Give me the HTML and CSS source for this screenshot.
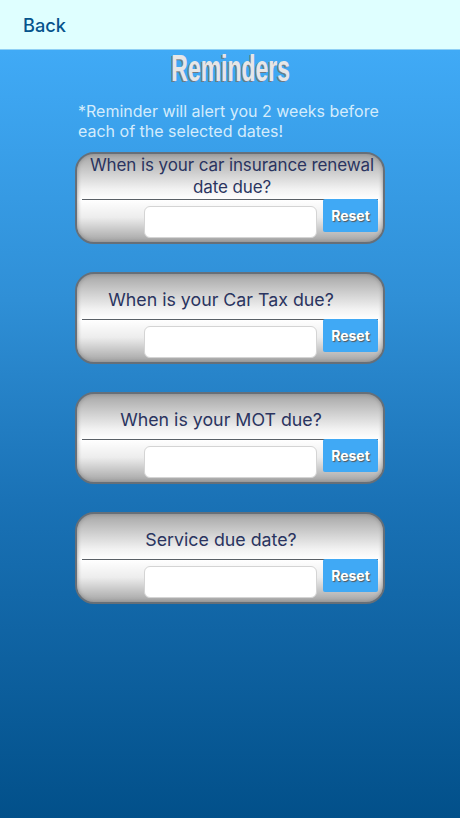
FILE: index.html
```html
<!DOCTYPE html>
<html lang="en">
<head>
    <meta charset="UTF-8">
    <meta name="viewport" content="width=device-width, initial-scale=1.0">
    <title>Reminders</title>
    <link rel="stylesheet" href="styles.css">
</head>
<body>
    <header class="topbar">
        <a class="back" href="#">Back</a>
    </header>

    <main class="content">
        <h1 class="title"><span>Reminders</span></h1>
        <p class="note">*Reminder will alert you 2 weeks before each of the selected dates!</p>

        <section class="card">
            <h2 class="question question-long">When is your car insurance renewal date due?</h2>
            <div class="answer">
                <input class="date" type="text">
                <button class="reset" type="button">Reset</button>
            </div>
        </section>

        <section class="card">
            <h2 class="question">When is your Car Tax due?</h2>
            <div class="answer">
                <input class="date" type="text">
                <button class="reset" type="button">Reset</button>
            </div>
        </section>

        <section class="card">
            <h2 class="question">When is your MOT due?</h2>
            <div class="answer">
                <input class="date" type="text">
                <button class="reset" type="button">Reset</button>
            </div>
        </section>

        <section class="card">
            <h2 class="question">Service due date?</h2>
            <div class="answer">
                <input class="date" type="text">
                <button class="reset" type="button">Reset</button>
            </div>
        </section>
    </main>
</body>
</html>
```

FILE: styles.css
```css
* {
    box-sizing: border-box;
}

html, body {
    height: 100%;
}

body {
    margin: 0;
    font-family: Inter, "Liberation Sans", sans-serif;
    background: linear-gradient(#40aaf6 50px, #2f8fd6 300px, #1a72b6 500px, #02508a 818px);
}

.topbar {
    height: 50px;
    padding: 14px 23px 0;
    background: #dfffff;
    border-bottom: 1px solid #8fd0f5;
}

.back {
    color: #06548c;
    font-size: 18.2px;
    font-weight: 500;
    text-decoration: none;
}

.content {
    display: flex;
    flex-direction: column;
    align-items: center;
}

.title {
    height: 36px;
    margin: 0 0 0 2px;
    font-family: "Liberation Sans", sans-serif;
    font-size: 37px;
    font-weight: 700;
    line-height: 37px;
    color: #e6e6e6;
}

.title span {
    display: inline-block;
    transform: scaleX(0.62);
    text-shadow: -2px 1px 0 #707a84;
}

.note {
    width: 304px;
    margin: 16px 0 0;
    color: #d4ecfc;
    font-size: 16px;
    line-height: 19.5px;
}

.card {
    width: 310px;
    height: 92px;
    margin-bottom: 28px;
    padding: 0 5px;
    border: 2px solid #666f78;
    border-radius: 19px;
    background: linear-gradient(#a6a6a6, #f2f2f2 40%, #ffffff 52%, #ededed 72%, #a4a4a4);
    box-shadow: inset 0 0 4px #8a8a8a;
}

.card:first-of-type {
    margin-top: 11px;
}

.question {
    display: flex;
    align-items: center;
    justify-content: center;
    height: 46px;
    margin: 0;
    padding: 6px 18px 0 0;
    border-bottom: 1.5px solid #5a6066;
    color: #2a3460;
    font-size: 17.8px;
    font-weight: 400;
    line-height: 22px;
    text-align: center;
}

.question-long {
    padding: 0 0 2px 4px;
    font-size: 17px;
    letter-spacing: -0.1px;
}

.answer {
    display: flex;
    align-items: flex-start;
    justify-content: flex-end;
    gap: 6px;
}

.date {
    width: 173px;
    height: 32px;
    margin-top: 6px;
    border: 1px solid #d4d4d4;
    border-radius: 6px;
    background: #fff;
}

.reset {
    width: 55px;
    height: 33px;
    margin-top: -1px;
    padding: 0;
    border: none;
    border-radius: 2px;
    background: #40a9f5;
    color: #fff;
    font-family: inherit;
    font-size: 14px;
    font-weight: 700;
    text-shadow: 1px 1px 1px #555;
}
```
